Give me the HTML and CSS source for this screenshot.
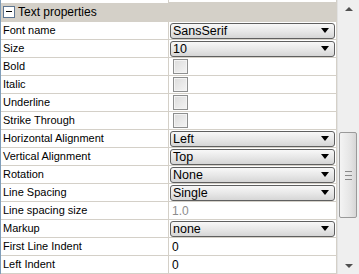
FILE: index.html
```html
<!DOCTYPE html>
<html lang="en">
<head>
    <meta charset="UTF-8">
    <title>Text properties</title>
    <link rel="stylesheet" href="styles.css">
</head>
<body>

<div class="panel">
    <!-- Property sheet -->
    <div class="sheet">
        <div class="stub"></div>

        <div class="section">
            <span class="toggle"></span>
            <span class="section-title">Text properties</span>
        </div>

        <div class="prop">
            <div class="name">Font name</div>
            <div class="value"><div class="combo"><span>SansSerif</span><i class="arrow"></i></div></div>
        </div>
        <div class="prop">
            <div class="name">Size</div>
            <div class="value"><div class="combo"><span>10</span><i class="arrow"></i></div></div>
        </div>
        <div class="prop">
            <div class="name">Bold</div>
            <div class="value"><span class="check"></span></div>
        </div>
        <div class="prop">
            <div class="name">Italic</div>
            <div class="value"><span class="check"></span></div>
        </div>
        <div class="prop">
            <div class="name">Underline</div>
            <div class="value"><span class="check"></span></div>
        </div>
        <div class="prop">
            <div class="name">Strike Through</div>
            <div class="value"><span class="check"></span></div>
        </div>
        <div class="prop">
            <div class="name">Horizontal Alignment</div>
            <div class="value"><div class="combo"><span>Left</span><i class="arrow"></i></div></div>
        </div>
        <div class="prop">
            <div class="name">Vertical Alignment</div>
            <div class="value"><div class="combo"><span>Top</span><i class="arrow"></i></div></div>
        </div>
        <div class="prop">
            <div class="name">Rotation</div>
            <div class="value"><div class="combo"><span>None</span><i class="arrow"></i></div></div>
        </div>
        <div class="prop">
            <div class="name">Line Spacing</div>
            <div class="value"><div class="combo"><span>Single</span><i class="arrow"></i></div></div>
        </div>
        <div class="prop">
            <div class="name">Line spacing size</div>
            <div class="value"><span class="text disabled">1.0</span></div>
        </div>
        <div class="prop">
            <div class="name">Markup</div>
            <div class="value"><div class="combo"><span>none</span><i class="arrow"></i></div></div>
        </div>
        <div class="prop">
            <div class="name">First Line Indent</div>
            <div class="value"><span class="text">0</span></div>
        </div>
        <div class="prop">
            <div class="name">Left Indent</div>
            <div class="value"><span class="text">0</span></div>
        </div>
    </div>

    <!-- Vertical scrollbar -->
    <div class="scrollbar">
        <div class="step"><i class="up"></i></div>
        <div class="track">
            <div class="thumb">
                <span class="grip"></span>
            </div>
        </div>
        <div class="step"><i class="down"></i></div>
    </div>
</div>

</body>
</html>
```

FILE: styles.css
```css
/* General styles */
body {
    margin: 0;
    padding: 0;
    background-color: #ffffff;
    font-family: "Liberation Sans", Arial, sans-serif;
    font-size: 11px;
    color: #000000;
}

.panel {
    display: flex;
    width: 359px;
    height: 274px;
    overflow: hidden;
}

/* Property sheet */
.sheet {
    width: 335px;
    border-left: 1px solid #7f9db9;
    border-right: 1px solid #d4d0c8;
    background-color: #ffffff;
    flex-shrink: 0;
}

.stub {
    height: 2px;
    border-bottom: 1px solid #d4d0c8;
    margin-left: 167px;
    border-left: 1px solid #d4d0c8;
}

.section {
    height: 18px;
    background-color: #d4d0c8;
    display: flex;
    align-items: center;
    border-bottom: 1px solid #d4d0c8;
}

.toggle {
    width: 10px;
    height: 10px;
    margin-left: 2px;
    border: 1px solid #5e7590;
    background-color: #ffffff;
    position: relative;
}

.toggle::after {
    content: "";
    position: absolute;
    left: 2px;
    top: 4px;
    width: 6px;
    height: 1px;
    background-color: #000000;
}

.section-title {
    margin-left: 3px;
    font-size: 12px;
}

/* Property rows */
.prop {
    display: flex;
    height: 17px;
    border-bottom: 1px solid #d4d0c8;
}

.prop .name {
    width: 165px;
    padding-left: 2px;
    border-right: 1px solid #d4d0c8;
    line-height: 17px;
    white-space: nowrap;
}

.prop .value {
    flex: 1;
    display: flex;
    align-items: center;
    padding: 0 1px;
}

.text {
    padding-left: 2px;
    font-size: 12px;
}

.text.disabled {
    color: #8c8c8c;
}

/* Combo boxes */
.combo {
    flex: 1;
    height: 14px;
    display: flex;
    align-items: center;
    justify-content: space-between;
    border: 1px solid #5f5f5f;
    border-radius: 3px;
    background: linear-gradient(#f8f8f8, #e8e8e8 50%, #d6d6d6);
    font-size: 12.5px;
    padding-left: 2px;
}

.combo .arrow {
    width: 0;
    height: 0;
    margin-right: 5px;
    border-left: 4px solid transparent;
    border-right: 4px solid transparent;
    border-top: 5px solid #000000;
}

/* Checkboxes */
.check {
    width: 13px;
    height: 13px;
    margin-left: 3px;
    border: 1px solid #8e8f8f;
    background: linear-gradient(135deg, #dcdcdc, #f4f4f4);
    box-shadow: inset 0 0 0 1px #f4f4f4;
}

/* Scrollbar */
.scrollbar {
    flex: 1;
    display: flex;
    flex-direction: column;
    background-color: #efefef;
    border-left: 1px solid #e2e2e2;
}

.step {
    height: 17px;
    display: flex;
    align-items: center;
    justify-content: center;
}

.step i {
    width: 0;
    height: 0;
    border-left: 4px solid transparent;
    border-right: 4px solid transparent;
}

.step .up {
    border-bottom: 4px solid #505050;
}

.step .down {
    border-top: 4px solid #505050;
}

.track {
    flex: 1;
    position: relative;
}

.thumb {
    position: absolute;
    top: 115px;
    left: 1px;
    right: 2px;
    height: 84px;
    border: 1px solid #9a9a9a;
    border-radius: 2px;
    background: linear-gradient(90deg, #f4f4f4, #e6e6e6 60%, #d6d6d6);
    display: flex;
    align-items: center;
    justify-content: center;
}

.grip {
    width: 7px;
    height: 7px;
    border-top: 1px solid #8a8a8a;
    border-bottom: 1px solid #8a8a8a;
    position: relative;
}

.grip::after {
    content: "";
    position: absolute;
    left: 0;
    right: 0;
    top: 3px;
    height: 1px;
    background-color: #8a8a8a;
}
```
